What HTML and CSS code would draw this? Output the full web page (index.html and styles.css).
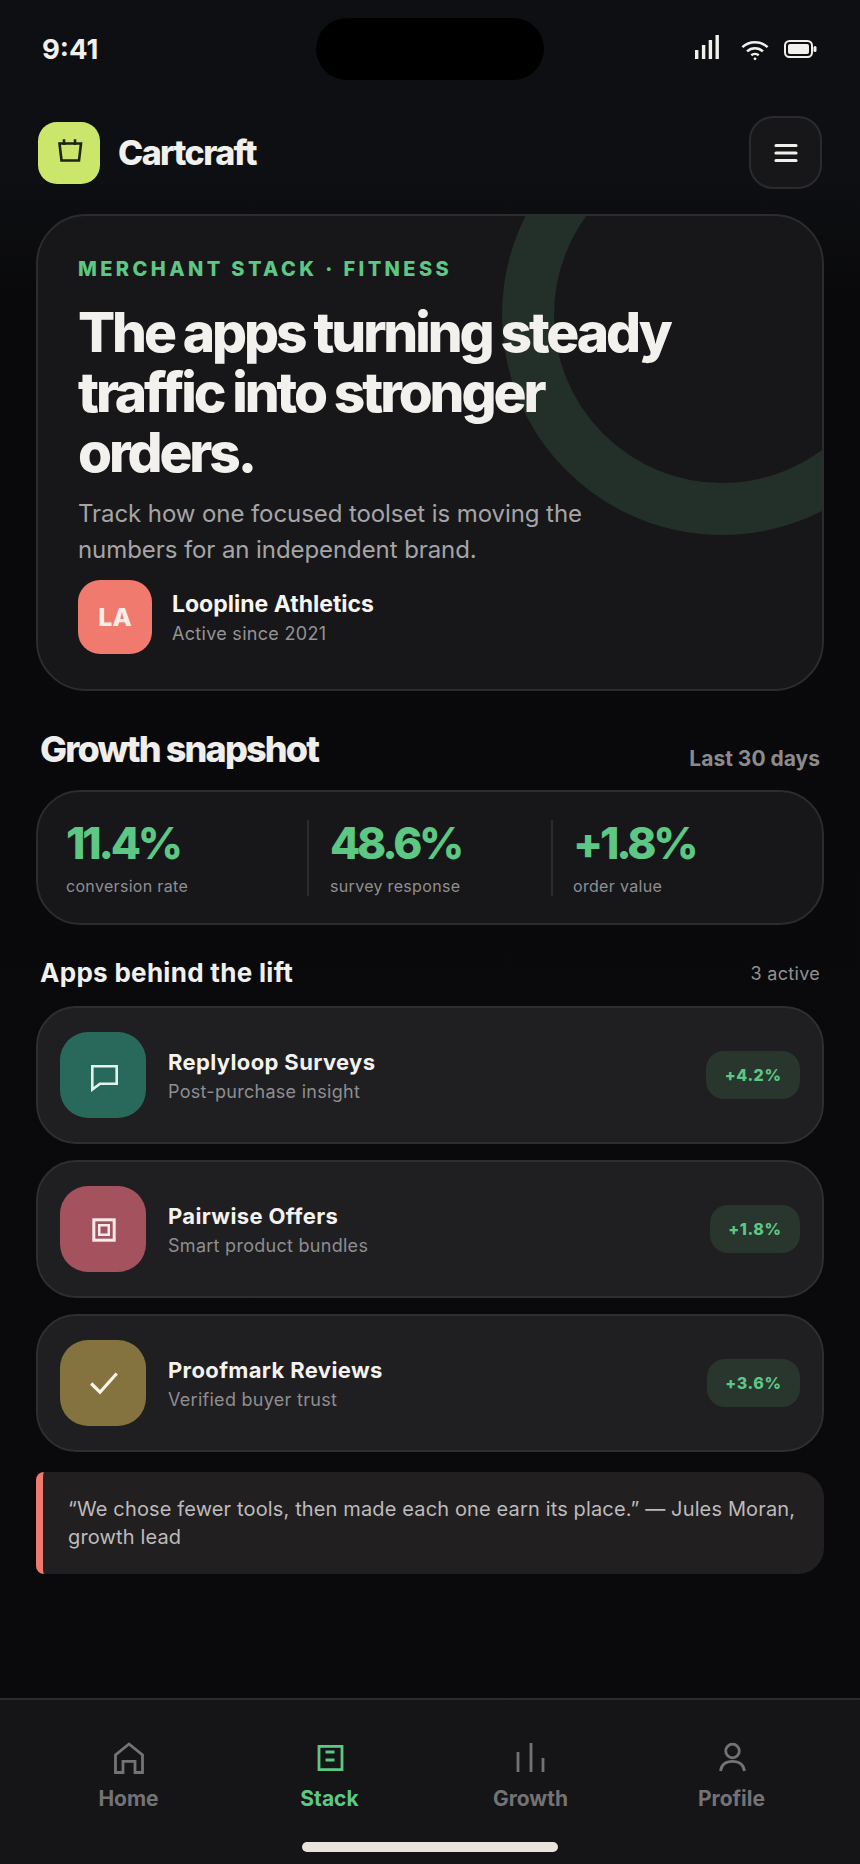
FILE: index.html
```html
<!DOCTYPE html>
<html lang="en">
<head>
  <meta charset="UTF-8">
  <title>Cartcraft</title>
  <meta name="viewport" content="width=device-width, initial-scale=1.0">
  <link rel="stylesheet" href="styles.css">
</head>
<body>
  <div class="page">
    <div class="status-bar">
      <span class="time">9:41</span>
      <div class="island"></div>
      <div class="status-icons">
        <svg class="icon-signal" width="24" height="24" viewBox="0 0 24 24" fill="#f2f0ec"><rect x="0" y="15" width="3.400" height="9"/><rect x="6.900" y="10" width="3.400" height="14"/><rect x="13.700" y="5" width="3.400" height="19"/><rect x="20.500" y="0" width="3.400" height="24"/></svg>
        <svg class="icon-wifi" width="28" height="23" viewBox="0 0 30 24" fill="none" stroke="#f2f0ec" stroke-width="2.800"><path d="M1.500 9.500C9 2.500 21 2.500 28.500 9.500"/><path d="M6.500 14C11.500 9.500 18.500 9.500 23.500 14"/><path d="M11 18.200C13.300 16.300 16.700 16.300 19 18.200"/><circle cx="15" cy="22" r="1.500" fill="#f2f0ec" stroke="none"/></svg>
        <svg class="icon-battery" width="33" height="18" viewBox="0 0 33 18" fill="none"><rect x="1" y="1" width="27" height="16" rx="4.500" stroke="#f2f0ec" stroke-width="2"/><rect x="4" y="4" width="21" height="10" rx="2" fill="#f2f0ec"/><rect x="29.500" y="6" width="3" height="6" rx="1.500" fill="#f2f0ec"/></svg>
      </div>
    </div>

    <header class="app-header">
      <div class="brand">
        <div class="brand-logo">
          <svg width="30" height="30" viewBox="0 0 30 30" fill="none" stroke="#1c2412" stroke-width="2.600"><path d="M5.500 5.500H27L25 22.500H7.500Z"/><path d="M10 1.300V7M21 1.300V7"/></svg>
        </div>
        <span class="brand-name">Cartcraft</span>
      </div>
      <div class="menu-btn">
        <svg width="26" height="20" viewBox="0 0 26 20" fill="none" stroke="#f2f0ec" stroke-width="3.200" stroke-linecap="round"><path d="M3 2.500H23M3 10H23M3 17.500H23"/></svg>
      </div>
    </header>

    <section class="hero">
      <div class="hero-ring"></div>
      <div class="eyebrow">MERCHANT STACK · FITNESS</div>
      <h1>The apps turning steady traffic into stronger orders.</h1>
      <p class="hero-text">Track how one focused toolset is moving the numbers for an independent brand.</p>
      <div class="merchant">
        <div class="merchant-avatar">LA</div>
        <div>
          <div class="merchant-name">Loopline Athletics</div>
          <div class="merchant-since">Active since 2021</div>
        </div>
      </div>
    </section>

    <div class="section-head snapshot-head">
      <h2>Growth snapshot</h2>
      <span class="range">Last 30 days</span>
    </div>

    <section class="stats">
      <div class="stat">
        <div class="stat-value">11.4%</div>
        <div class="stat-label">conversion rate</div>
      </div>
      <div class="stat">
        <div class="stat-value">48.6%</div>
        <div class="stat-label">survey response</div>
      </div>
      <div class="stat">
        <div class="stat-value">+1.8%</div>
        <div class="stat-label">order value</div>
      </div>
    </section>

    <div class="section-head apps-head">
      <h3>Apps behind the lift</h3>
      <span class="count">3 active</span>
    </div>

    <section class="app-list">
      <div class="app-row">
        <div class="app-icon teal">
          <svg width="34" height="34" viewBox="0 0 34 34" fill="none" stroke="#e2f3ee" stroke-width="2.600"><path d="M6.300 8.300H30.700V25.700H14L6.300 31.500Z"/></svg>
        </div>
        <div class="app-info">
          <div class="app-name">Replyloop Surveys</div>
          <div class="app-desc">Post-purchase insight</div>
        </div>
        <span class="lift">+4.2%</span>
      </div>
      <div class="app-row">
        <div class="app-icon rose">
          <svg width="30" height="30" viewBox="0 0 30 30" fill="none" stroke="#f8ecea"><rect x="5.800" y="5.800" width="20.400" height="20.400" stroke-width="3"/><rect x="11.250" y="11.250" width="9.500" height="9.500" stroke-width="2.500"/></svg>
        </div>
        <div class="app-info">
          <div class="app-name">Pairwise Offers</div>
          <div class="app-desc">Smart product bundles</div>
        </div>
        <span class="lift">+1.8%</span>
      </div>
      <div class="app-row">
        <div class="app-icon olive">
          <svg width="30" height="30" viewBox="0 0 30 30" fill="none" stroke="#f8f5e6" stroke-width="3.200"><path d="M3.200 15.500L12 24.200L28.700 5.500"/></svg>
        </div>
        <div class="app-info">
          <div class="app-name">Proofmark Reviews</div>
          <div class="app-desc">Verified buyer trust</div>
        </div>
        <span class="lift">+3.6%</span>
      </div>
    </section>

    <blockquote class="quote">“We chose fewer tools, then made each one earn its place.” — Jules Moran, growth lead</blockquote>

    <nav class="tab-bar">
      <div class="tabs">
        <div class="tab">
          <svg width="34" height="32" viewBox="0 0 34 32" fill="none" stroke="currentColor" stroke-width="2.800"><path d="M3.500 30.500V13L17 2L30.500 13V30.500H23V19.400H11V30.500Z"/></svg>
          <span>Home</span>
        </div>
        <div class="tab active">
          <svg width="34" height="32" viewBox="0 0 34 32" fill="none" stroke="currentColor" stroke-width="2.800"><rect x="6" y="4.400" width="23" height="23.200"/><path d="M12.500 10H21.500M12.500 18H21.500"/></svg>
          <span>Stack</span>
        </div>
        <div class="tab">
          <svg width="34" height="32" viewBox="0 0 34 32" fill="none" stroke="currentColor" stroke-width="2.800"><path d="M4 10V30M17 1V30M29 16V30"/></svg>
          <span>Growth</span>
        </div>
        <div class="tab">
          <svg width="34" height="32" viewBox="0 0 34 32" fill="none" stroke="currentColor" stroke-width="2.800"><circle cx="17.500" cy="9" r="6.800"/><path d="M5.500 29C6.500 22.500 11 19.400 17.500 19.400C24 19.400 28.500 22.500 29.500 29"/></svg>
          <span>Profile</span>
        </div>
      </div>
      <div class="home-indicator"></div>
    </nav>
  </div>
</body>
</html>
```

FILE: styles.css
```css
* {
  box-sizing: border-box;
}

body {
  margin: 0;
  background: #0b0b0e;
  font-family: Inter, 'Liberation Sans', sans-serif;
  color: #f2f0ec;
}

.page {
  width: 860px;
  height: 1864px;
  display: flex;
  flex-direction: column;
  padding: 0 36px;
  overflow: hidden;
  background: linear-gradient(to bottom, #0e0f12 0, #0e0f12 180px, #09090b 300px, #0a0a0d 100%);
}

/* status bar */
.status-bar {
  height: 80px;
  padding-top: 18px;
  display: flex;
  align-items: flex-start;
  justify-content: space-between;
  position: relative;
}

.time {
  margin: 16px 0 0 6px;
  font-size: 27.500px;
  line-height: 30px;
  font-weight: 700;
}

.island {
  position: absolute;
  top: 18px;
  left: 280px;
  width: 228px;
  height: 62px;
  border-radius: 31px;
  background: #000;
}

.status-icons {
  display: flex;
  align-items: flex-start;
  gap: 15px;
  margin: 17px 7px 0 0;
}

.icon-signal { margin-right: 7px; }
.icon-wifi { margin-top: 3px; }
.icon-battery { margin-top: 5px; }

/* header */
.app-header {
  margin-top: 36px;
  height: 73px;
  display: flex;
  align-items: center;
  justify-content: space-between;
}

.brand {
  display: flex;
  align-items: center;
  gap: 18px;
  margin-left: 2px;
}

.brand-logo {
  width: 62px;
  height: 62px;
  border-radius: 19px;
  background: #cbe76b;
  display: flex;
  align-items: center;
  justify-content: center;
}

.brand-name {
  font-size: 34px;
  font-weight: 800;
  letter-spacing: -1.600px;
}

.menu-btn {
  width: 73px;
  height: 73px;
  margin-right: 2px;
  border-radius: 24px;
  border: 2px solid #2b2b2f;
  background: #17171a;
  display: flex;
  align-items: center;
  justify-content: center;
}

/* hero */
.hero {
  position: relative;
  overflow: hidden;
  margin-top: 25px;
  height: 477px;
  padding: 41px 40px 0;
  border: 2px solid #2c2c2f;
  border-radius: 50px;
  background: #17171a;
}

.hero-ring {
  position: absolute;
  top: -121px;
  right: -120px;
  width: 440px;
  height: 440px;
  border: 52px solid #232f29;
  border-radius: 50%;
}

.eyebrow,
.hero h1,
.hero-text,
.merchant {
  position: relative;
}

.eyebrow {
  font-size: 20px;
  line-height: 24px;
  font-weight: 800;
  letter-spacing: 3.400px;
  color: #5dc784;
}

.hero h1 {
  margin: 21px 0 0;
  max-width: 600px;
  font-size: 55px;
  line-height: 60px;
  font-weight: 800;
  letter-spacing: -3.100px;
  color: #f3f1ed;
}

.hero-text {
  margin: 14px 0 0;
  max-width: 540px;
  font-size: 24px;
  line-height: 36px;
  letter-spacing: -0.080px;
  color: #a5a5a7;
}

.merchant {
  margin-top: 12px;
  display: flex;
  align-items: center;
  gap: 20px;
}

.merchant-avatar {
  width: 74px;
  height: 74px;
  border-radius: 22px;
  background: #f07a6e;
  color: #fbeeea;
  font-size: 25px;
  font-weight: 800;
  display: flex;
  align-items: center;
  justify-content: center;
}

.merchant-name {
  font-size: 23px;
  line-height: 30px;
  font-weight: 700;
  color: #f7f5f2;
}

.merchant-since {
  margin-top: 3px;
  font-size: 18px;
  line-height: 24px;
  letter-spacing: 0.300px;
  color: #939395;
}

/* section heads */
.section-head {
  display: flex;
  justify-content: space-between;
  padding: 0 4px;
}

.snapshot-head {
  margin-top: 36px;
  height: 63px;
  align-items: flex-start;
}

.section-head h2 {
  margin: 0;
  font-size: 36px;
  line-height: 44px;
  font-weight: 800;
  letter-spacing: -1.850px;
  color: #efeeea;
}

.range {
  margin-top: 19px;
  font-size: 21px;
  line-height: 26px;
  font-weight: 700;
  color: #8b8b8d;
}

/* stats */
.stats {
  height: 135px;
  padding: 28px 0 0 28px;
  border: 2px solid #2c2c2f;
  border-radius: 44px;
  background: #17171a;
  display: grid;
  grid-template-columns: 241px 244px 1fr;
  align-items: start;
}

.stat {
  height: 76px;
  padding-left: 21px;
  border-left: 2px solid #2b2b2e;
}

.stat:first-child {
  padding-left: 0;
  border-left: none;
}

.stat:last-child {
  padding-left: 20px;
}

.stat-value {
  margin-top: -1px;
  font-size: 44px;
  line-height: 48px;
  font-weight: 800;
  letter-spacing: -3.200px;
  color: #5dc784;
}

.stat-label {
  margin-top: 7px;
  font-size: 16px;
  line-height: 24px;
  letter-spacing: 0.320px;
  color: #8f8f91;
}

.apps-head {
  margin-top: 31px;
  height: 50px;
}

.section-head h3 {
  margin: 0;
  font-size: 26px;
  line-height: 34px;
  font-weight: 700;
  letter-spacing: 0.300px;
  color: #f2f0ec;
}

.count {
  margin-top: 5px;
  font-size: 18px;
  line-height: 26px;
  letter-spacing: 0.300px;
  color: #919193;
}

/* app rows */
.app-list {
  display: flex;
  flex-direction: column;
  gap: 16px;
}

.app-row {
  height: 138px;
  padding: 0 22px;
  border: 2px solid #2e2d30;
  border-radius: 40px;
  background: #1f1e21;
  display: flex;
  align-items: center;
  gap: 22px;
}

.app-icon {
  width: 86px;
  height: 86px;
  border-radius: 28px;
  display: flex;
  align-items: center;
  justify-content: center;
}

.teal { background: #29695b; }
.rose { background: #a5525f; }
.olive { background: #85733f; }

.app-info {
  flex: 1;
}

.app-name {
  font-size: 22px;
  line-height: 30px;
  font-weight: 700;
  letter-spacing: 0.370px;
  color: #f4f2ee;
}

.app-desc {
  margin-top: 3px;
  font-size: 18px;
  line-height: 24px;
  letter-spacing: 0.280px;
  color: #8e8e90;
}

.lift {
  height: 48px;
  padding: 0 18.500px;
  border-radius: 18px;
  background: #28362e;
  color: #5dc784;
  font-size: 16px;
  line-height: 48px;
  font-weight: 800;
  letter-spacing: 0.600px;
}

/* quote */
.quote {
  margin: 20px 0 0;
  height: 102px;
  padding: 23px 24px 0 25px;
  border-left: 7px solid #f07a6e;
  border-radius: 8px 26px 26px 8px;
  background: #221f21;
  font-size: 20px;
  line-height: 28px;
  letter-spacing: 0.140px;
  color: #bdbbbb;
}

/* bottom nav */
.tab-bar {
  margin: auto -36px 0;
  height: 166px;
  border-top: 2px solid #2b2b2e;
  background: #151517;
  padding: 42px 28px 0;
  position: relative;
}

.tabs {
  display: grid;
  grid-template-columns: repeat(4, 1fr);
}

.tab {
  display: flex;
  flex-direction: column;
  align-items: center;
  gap: 11px;
  color: #737375;
  font-size: 21px;
  line-height: 28px;
  font-weight: 700;
}

.tab.active {
  color: #5dc784;
}

.home-indicator {
  position: absolute;
  left: 302px;
  bottom: 12px;
  width: 256px;
  height: 10px;
  border-radius: 5px;
  background: #e8e4dc;
}
```
